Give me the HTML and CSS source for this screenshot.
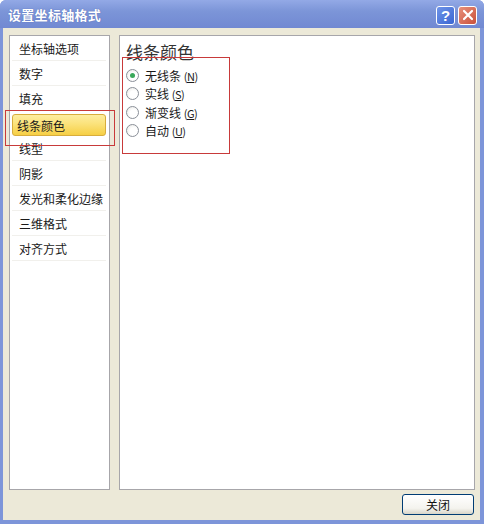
FILE: index.html
```html
<!DOCTYPE html>
<html lang="zh">
<head>
<meta charset="utf-8">
<title>设置坐标轴格式</title>
<link rel="stylesheet" href="styles.css">
</head>
<body>
<div class="window">
  <div class="titlebar">
    <span class="title">设置坐标轴格式</span>
    <div class="caption-buttons">
      <span class="cbtn help">?</span>
      <span class="cbtn close">
        <svg width="12" height="12" viewBox="0 0 12 12"><path d="M2 2 L10 10 M10 2 L2 10" stroke="#fff" stroke-width="2.2" stroke-linecap="round"/></svg>
      </span>
    </div>
  </div>
  <div class="client">
    <div class="nav">
      <div class="nav-item">坐标轴选项</div>
      <div class="nav-item">数字</div>
      <div class="nav-item">填充</div>
      <div class="nav-item selected"><span class="hl">线条颜色</span></div>
      <div class="nav-item">线型</div>
      <div class="nav-item">阴影</div>
      <div class="nav-item">发光和柔化边缘</div>
      <div class="nav-item">三维格式</div>
      <div class="nav-item">对齐方式</div>
      <div class="mark mark-nav"></div>
    </div>
    <div class="content">
      <div class="heading">线条颜色</div>
      <div class="options">
        <label class="opt"><span class="radio checked"></span><span class="txt">无线条 <span class="key">(<u>N</u>)</span></span></label>
        <label class="opt"><span class="radio"></span><span class="txt">实线 <span class="key">(<u>S</u>)</span></span></label>
        <label class="opt"><span class="radio"></span><span class="txt">渐变线 <span class="key">(<u>G</u>)</span></span></label>
        <label class="opt"><span class="radio"></span><span class="txt">自动 <span class="key">(<u>U</u>)</span></span></label>
      </div>
      <div class="mark mark-content"></div>
    </div>
    <div class="footer">
      <button class="btn">关闭</button>
    </div>
  </div>
</div>
</body>
</html>
```

FILE: styles.css
```css
html, body {
  margin: 0;
  padding: 0;
  background: #ffffff;
}
body {
  font-family: "Noto Sans CJK SC", "Noto Sans", sans-serif;
  font-size: 12px;
  color: #1a1a1a;
}
.window {
  width: 484px;
  height: 524px;
  display: flex;
  flex-direction: column;
  background: #7d95d9;
  box-sizing: border-box;
  border-radius: 6px 6px 0 0;
  overflow: hidden;
}
.titlebar {
  height: 28px;
  flex: none;
  display: flex;
  align-items: center;
  justify-content: space-between;
  padding: 0 7px 0 8px;
  background: linear-gradient(#93a9e6 0%, #7c95d8 40%, #7189d2 100%);
}
.title {
  color: #ffffff;
  font-weight: bold;
  font-size: 13px;
  letter-spacing: 0.3px;
  text-shadow: 0 0 1px rgba(40, 60, 140, 0.6);
}
.caption-buttons {
  display: flex;
  gap: 3px;
  margin-top: 2px;
}
.cbtn {
  width: 19px;
  height: 19px;
  border: 1px solid #ffffff;
  border-radius: 3px;
  box-sizing: border-box;
  display: flex;
  align-items: center;
  justify-content: center;
  color: #fff;
  font-family: "Liberation Sans", sans-serif;
  font-weight: bold;
  font-size: 15px;
}
.help {
  background: linear-gradient(135deg, #6f94e8, #3a66d2);
}
.close {
  background: linear-gradient(135deg, #e8917c, #c9503a);
}
.client {
  flex: 1;
  margin: 0 4px 4px 3px;
  background: #ece9d8;
  display: grid;
  grid-template-columns: 101px 1fr;
  grid-template-rows: 1fr auto;
  column-gap: 9px;
  padding: 7px 5px 5px 6px;
  box-sizing: border-box;
}
.nav {
  position: relative;
  background: #ffffff;
  border: 1px solid #a7a6aa;
  box-sizing: border-box;
}
.nav-item {
  height: 25px;
  line-height: 25px;
  padding-left: 7px;
  margin: 0 3px 0 2px;
  border-bottom: 1px solid #f1f0ec;
  box-sizing: border-box;
  white-space: nowrap;
}
.nav-item.selected {
  padding: 3px 0 0;
  line-height: 20px;
  border-bottom-color: transparent;
}
.hl {
  display: block;
  height: 22px;
  line-height: 21px;
  padding-left: 4px;
  box-sizing: border-box;
  border: 1px solid #d8ad3c;
  border-radius: 3px;
  background: linear-gradient(#fdeea0 0%, #fbe27a 45%, #f6cf45 100%);
}
.content {
  position: relative;
  background: #ffffff;
  border: 1px solid #a7a6aa;
  box-sizing: border-box;
  padding: 5px 0 0 6px;
}
.heading {
  font-size: 17px;
  line-height: 22px;
  color: #333333;
}
.options {
  display: flex;
  flex-direction: column;
  margin-top: 3px;
}
.opt {
  display: flex;
  align-items: center;
  height: 18.5px;
  gap: 6px;
  white-space: nowrap;
}
.key {
  font-size: 11px;
  letter-spacing: -0.5px;
}
.key u {
  text-decoration: underline;
}
.radio {
  width: 13px;
  height: 13px;
  border-radius: 50%;
  border: 1px solid #8a8f98;
  box-sizing: border-box;
  background: radial-gradient(circle at 60% 60%, #ffffff 40%, #e4e4e0 100%);
  position: relative;
  flex: none;
}
.radio.checked::after {
  content: "";
  position: absolute;
  left: 3px;
  top: 3px;
  width: 5px;
  height: 5px;
  border-radius: 50%;
  background: #3aa85a;
}
.mark {
  position: absolute;
  border: 1px solid #c83a3a;
  pointer-events: none;
}
.mark-nav {
  left: -5px;
  top: 74px;
  width: 108px;
  height: 34px;
}
.mark-content {
  left: 2px;
  top: 21px;
  width: 106px;
  height: 95px;
}
.footer {
  grid-column: 1 / 3;
  display: flex;
  justify-content: flex-end;
  padding-top: 4px;
}
.btn {
  width: 72px;
  height: 21px;
  margin-right: 1px;
  font-family: "Noto Sans CJK SC", sans-serif;
  font-size: 12px;
  color: #111;
  border: 1px solid #003c74;
  border-radius: 3px;
  background: linear-gradient(#ffffff 0%, #f4f3ee 70%, #d8d5c8 100%);
  padding: 0;
  line-height: 19px;
}
```
